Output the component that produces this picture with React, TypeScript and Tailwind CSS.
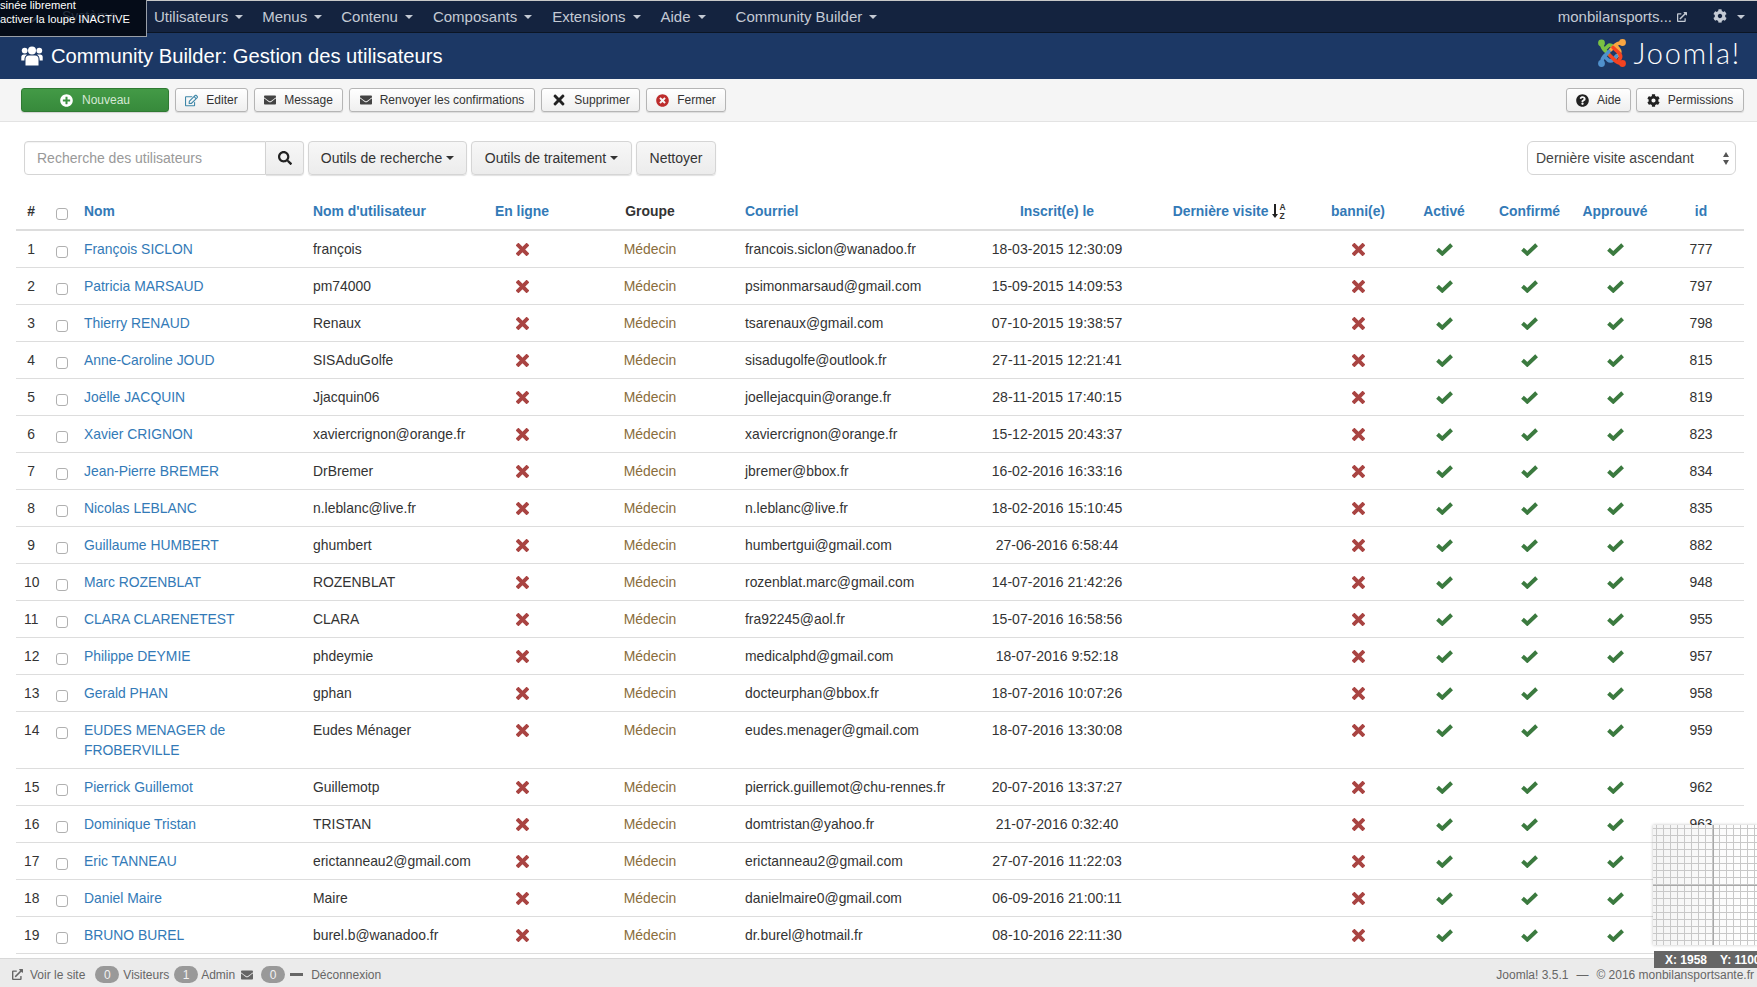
import React from "react";
import { FaCheck, FaCog, FaEnvelope, FaExternalLinkAlt, FaPlusCircle, FaQuestionCircle, FaRegEdit, FaSearch, FaTimes, FaTimesCircle } from "react-icons/fa";

const rows: [number, string, string, string, string, number][] = [
  [1, "François SICLON", "françois", "francois.siclon@wanadoo.fr", "18-03-2015 12:30:09", 777],
  [2, "Patricia MARSAUD", "pm74000", "psimonmarsaud@gmail.com", "15-09-2015 14:09:53", 797],
  [3, "Thierry RENAUD", "Renaux", "tsarenaux@gmail.com", "07-10-2015 19:38:57", 798],
  [4, "Anne-Caroline JOUD", "SISAduGolfe", "sisadugolfe@outlook.fr", "27-11-2015 12:21:41", 815],
  [5, "Joëlle JACQUIN", "Jjacquin06", "joellejacquin@orange.fr", "28-11-2015 17:40:15", 819],
  [6, "Xavier CRIGNON", "xaviercrignon@orange.fr", "xaviercrignon@orange.fr", "15-12-2015 20:43:37", 823],
  [7, "Jean-Pierre BREMER", "DrBremer", "jbremer@bbox.fr", "16-02-2016 16:33:16", 834],
  [8, "Nicolas LEBLANC", "n.leblanc@live.fr", "n.leblanc@live.fr", "18-02-2016 15:10:45", 835],
  [9, "Guillaume HUMBERT", "ghumbert", "humbertgui@gmail.com", "27-06-2016 6:58:44", 882],
  [10, "Marc ROZENBLAT", "ROZENBLAT", "rozenblat.marc@gmail.com", "14-07-2016 21:42:26", 948],
  [11, "CLARA CLARENETEST", "CLARA", "fra92245@aol.fr", "15-07-2016 16:58:56", 955],
  [12, "Philippe DEYMIE", "phdeymie", "medicalphd@gmail.com", "18-07-2016 9:52:18", 957],
  [13, "Gerald PHAN", "gphan", "docteurphan@bbox.fr", "18-07-2016 10:07:26", 958],
  [14, "EUDES MENAGER de FROBERVILLE", "Eudes Ménager", "eudes.menager@gmail.com", "18-07-2016 13:30:08", 959],
  [15, "Pierrick Guillemot", "Guillemotp", "pierrick.guillemot@chu-rennes.fr", "20-07-2016 13:37:27", 962],
  [16, "Dominique Tristan", "TRISTAN", "domtristan@yahoo.fr", "21-07-2016 0:32:40", 963],
  [17, "Eric TANNEAU", "erictanneau2@gmail.com", "erictanneau2@gmail.com", "27-07-2016 11:22:03", 964],
  [18, "Daniel Maire", "Maire", "danielmaire0@gmail.com", "06-09-2016 21:00:11", 965],
  [19, "BRUNO BUREL", "burel.b@wanadoo.fr", "dr.burel@hotmail.fr", "08-10-2016 22:11:30", 966],
];

const Caret = ({ className = "" }: { className?: string }) => (
  <span className={"inline-block h-0 w-0 border-x-[4px] border-t-[4px] border-x-transparent border-t-current align-middle " + className} />
);

const navItems: [string, string][] = [
  ["Utilisateurs", "mr-[19px]"],
  ["Menus", "mr-[19px]"],
  ["Contenu", "mr-[20px]"],
  ["Composants", "mr-[20px]"],
  ["Extensions", "mr-[20px]"],
  ["Aide", "mr-[30px]"],
  ["Community Builder", ""],
];

function JoomlaMark() {
  return (
    <svg width="30" height="30" viewBox="0 0 30 30" fill="none" strokeWidth="3.6" strokeLinecap="round">
      <path d="M4.5 5 Q5 10 8 12.5 L12 16.5" stroke="#7ac143" />
      <path d="M8 11 L11 8 Q13 6 16 8.5 L20 12.5" stroke="#7ac143" />
      <circle cx="4.5" cy="5" r="3.4" fill="#7ac143" />
      <path d="M25.5 4.5 Q20 5 17.5 8 L13.5 12" stroke="#f9a541" />
      <path d="M19 8 L21.5 11 Q24 14 21.5 16.5 L18 20" stroke="#f9a541" />
      <circle cx="25.5" cy="4.5" r="3.4" fill="#f9a541" />
      <path d="M4.5 25.5 Q5 20 8 17.5 L12 13.5" stroke="#5091cd" />
      <path d="M8 19 L11 22 Q13.5 24 16.5 21.5 L19.5 18" stroke="#5091cd" />
      <circle cx="4.5" cy="25.5" r="3.4" fill="#5091cd" />
      <path d="M25.5 25.5 Q20 25 17.5 22 L13 17.5" stroke="#f44321" />
      <path d="M22 22 Q25 19 22.5 15.5 L16 9.5" stroke="#f44321" />
      <circle cx="25.5" cy="25.5" r="3.4" fill="#f44321" />
    </svg>
  );
}

function UsersIcon() {
  return (
    <svg width="22" height="20" viewBox="0 0 22 20" fill="white">
      <circle cx="11" cy="4.6" r="4" />
      <circle cx="3.7" cy="4.6" r="2.9" />
      <circle cx="18.3" cy="4.6" r="2.9" />
      <path d="M4.5 19.5 V13 Q4.5 9.5 8 9.5 H14 Q17.5 9.5 17.5 13 V19.5 Z" />
      <path d="M0.3 14.5 V11 Q0.3 8.5 3 8.5 H6 Q3.4 10 3.4 13 V14.5 Z" />
      <path d="M21.7 14.5 V11 Q21.7 8.5 19 8.5 H16 Q18.6 10 18.6 13 V14.5 Z" />
    </svg>
  );
}

function SortIcon() {
  return (
    <svg width="14" height="16" viewBox="0 0 14 16" className="ml-[4px] inline-block align-[-3px]">
      <path d="M3 1v11" stroke="#222" strokeWidth="2" />
      <path d="M0 11h6l-3 4z" fill="#222" />
      <text x="7.5" y="7" fontSize="8.5" fontWeight="700" fill="#333" fontFamily="Liberation Sans, sans-serif">A</text>
      <text x="7.5" y="15.5" fontSize="8.5" fontWeight="700" fill="#333" fontFamily="Liberation Sans, sans-serif">Z</text>
    </svg>
  );
}

function ToolBtn({ icon, label, cls }: { icon: React.ReactNode; label: string; cls: string }) {
  return (
    <button className={"flex h-[24px] items-center justify-center rounded-[3px] border border-[#b5b5b5] bg-gradient-to-b from-white to-[#efefef] text-[12px] text-[#333] shadow-[0_1px_1px_rgba(0,0,0,0.1)] " + cls}>
      {icon}
      <span>{label}</span>
    </button>
  );
}

const filterBtn = "flex h-[34px] items-center justify-center rounded-[4px] border border-[#d5d5d5] bg-gradient-to-b from-[#f7f7f7] to-[#ececec] text-[14px] text-[#333] shadow-[0_1px_1px_rgba(0,0,0,0.12)]";

const th = "border-b-2 border-[#ddd] pt-[8px] pb-[8px] text-[13.9px] leading-[20px] font-bold whitespace-nowrap";
const td = "border-b border-[#ddd] px-[8px] py-[8px] align-top text-[13.9px] leading-[20px]";
const Cross = () => (
  <svg width="13" height="13" viewBox="0 0 13 13" className="mx-auto mt-[4px] block">
    <path d="M2.4 2.4 L10.6 10.6 M10.6 2.4 L2.4 10.6" stroke="#a94442" strokeWidth="3.9" strokeLinecap="square" />
  </svg>
);
const Check = () => (
  <svg width="17" height="13" viewBox="0 0 17 13" className="mx-auto mt-[4px] block">
    <path d="M1.5 6.2 L6.3 10.6 L15.6 1.8" fill="none" stroke="#3b7a3f" strokeWidth="4" />
  </svg>
);
const Box = () => <input type="checkbox" className="mt-[7px] ml-[2px] block h-[12px] w-[12px] appearance-none rounded-[3px] border border-[#b0b0b0] bg-white" />;

const widths = [30, 30, 229, 176, 82, 174, 236, 168, 174, 86, 86, 85, 86, 86];

export default function App() {
  return (
    <div className="relative flex h-[987px] w-[1757px] flex-col overflow-hidden bg-white font-['Liberation_Sans',Arial,sans-serif] text-[#333]">
      <nav className="flex h-[33px] shrink-0 items-center border-t border-t-[#c8c8c8] border-b border-b-[#0b1524] bg-[#14233f] pt-[1px] pl-[154px] pr-[12px] text-[15px] text-[#c4cad4]">
        {navItems.map(([t, m]) => (
          <span key={t} className={"flex items-center " + m}>
            {t}
            <Caret className="ml-[7px]" />
          </span>
        ))}
        <span className="ml-auto flex items-center">monbilansports...</span>
        <FaExternalLinkAlt className="ml-[5px] text-[10px]" />
        <FaCog className="ml-[26px] mb-[3px] text-[14px]" />
        <Caret className="ml-[10px]" />
      </nav>

      <header className="flex h-[46px] shrink-0 items-center bg-[#1c3865] pl-[21px] pr-[16px] text-white">
        <UsersIcon />
        <h1 className="ml-[8px] text-[20.2px] leading-none">Community Builder: Gestion des utilisateurs</h1>
        <div className="mb-[7px] ml-auto flex items-center">
          <JoomlaMark />
          <span className="ml-[6px] font-['Lato',sans-serif] text-[29px] leading-none font-light tracking-[1.8px]">Joomla!</span>
        </div>
      </header>

      <div className="flex h-[43px] shrink-0 items-center border-b border-[#e3e3e3] bg-[#f5f5f5] pl-[21px] pr-[13px]">
        <button className="flex h-[24px] w-[148px] items-center justify-center rounded-[3px] border border-[#2f7a32] bg-gradient-to-b from-[#439a46] to-[#378a3b] text-[12px] text-[#d5e8d5] shadow-[0_1px_1px_rgba(0,0,0,0.15)]">
          <FaPlusCircle className="mr-[9px] text-[13px] text-white" />
          Nouveau
        </button>
        <ToolBtn cls="ml-[6px] w-[73px]" icon={<FaRegEdit className="mr-[8px] text-[13px] text-[#3e87a8]" />} label="Editer" />
        <ToolBtn cls="ml-[6px] w-[89px]" icon={<FaEnvelope className="mr-[8px] text-[12px] text-[#444]" />} label="Message" />
        <ToolBtn cls="ml-[6px] w-[186px]" icon={<FaEnvelope className="mr-[8px] text-[12px] text-[#444]" />} label="Renvoyer les confirmations" />
        <ToolBtn cls="ml-[6px] w-[99px]" icon={<FaTimes className="mr-[7px] text-[16px] text-[#222]" />} label="Supprimer" />
        <ToolBtn cls="ml-[6px] w-[80px]" icon={<FaTimesCircle className="mr-[8px] text-[13px] text-[#bd2d2d]" />} label="Fermer" />
        <ToolBtn cls="ml-auto w-[65px]" icon={<FaQuestionCircle className="mr-[8px] text-[13px] text-[#222]" />} label="Aide" />
        <ToolBtn cls="ml-[5px] w-[108px]" icon={<FaCog className="mr-[8px] text-[13px] text-[#222]" />} label="Permissions" />
      </div>

      <div className="flex shrink-0 items-center pt-[19px] pl-[24px] pr-[21px]">
        <div className="flex h-[34px] w-[242px] items-center rounded-l-[4px] border border-[#d5d5d5] bg-white pl-[12px] text-[14px] text-[#999] shadow-[inset_0_1px_1px_rgba(0,0,0,0.05)]">
          Recherche des utilisateurs
        </div>
        <button className={filterBtn + " w-[38px] rounded-l-none border-l-0"}>
          <FaSearch className="text-[14px] text-[#222]" />
        </button>
        <button className={filterBtn + " ml-[4px] w-[159px]"}>
          Outils de recherche
          <Caret className="ml-[4px]" />
        </button>
        <button className={filterBtn + " ml-[4px] w-[161px]"}>
          Outils de traitement
          <Caret className="ml-[4px]" />
        </button>
        <button className={filterBtn + " ml-[4px] w-[80px]"}>Nettoyer</button>
        <div className="relative ml-auto flex h-[34px] w-[209px] items-center rounded-[6px] border border-[#d5d5d5] bg-white pl-[8px] text-[14px] text-[#444]">
          Dernière visite ascendant
          <span className="absolute top-[10px] right-[6px] h-0 w-0 border-x-[3px] border-b-[5px] border-x-transparent border-b-[#555]" />
          <span className="absolute top-[18px] right-[6px] h-0 w-0 border-x-[3px] border-t-[5px] border-x-transparent border-t-[#555]" />
        </div>
      </div>

      <div className="min-h-0 flex-1 overflow-hidden pt-[18px] pl-[16px]">
        <table className="w-[1728px] table-fixed border-separate border-spacing-0">
          <colgroup>
            {widths.map((w, i) => (
              <col key={i} style={{ width: w }} />
            ))}
          </colgroup>
          <thead>
            <tr>
              <th className={th + " px-[8px] text-center text-[#333]"}>#</th>
              <th className={th + " px-[8px]"}>
                <input type="checkbox" className="mt-[5px] ml-[2px] block h-[12px] w-[12px] appearance-none rounded-[3px] border border-[#b0b0b0] bg-white" />
              </th>
              <th className={th + " px-[8px] text-left text-[#337ab7]"}>Nom</th>
              <th className={th + " px-[8px] text-left text-[#337ab7]"}>Nom d'utilisateur</th>
              <th className={th + " px-[8px] text-center text-[#337ab7]"}>En ligne</th>
              <th className={th + " px-[8px] text-center text-[#333]"}>Groupe</th>
              <th className={th + " px-[8px] text-left text-[#337ab7]"}>Courriel</th>
              <th className={th + " px-[8px] text-center text-[#337ab7]"}>Inscrit(e) le</th>
              <th className={th + " pr-[7px] pl-[10px] text-center text-[#337ab7]"}>
                Dernière visite
                <SortIcon />
              </th>
              <th className={th + " px-[8px] text-center text-[#337ab7]"}>banni(e)</th>
              <th className={th + " px-[8px] text-center text-[#337ab7]"}>Activé</th>
              <th className={th + " px-[8px] text-center text-[#337ab7]"}>Confirmé</th>
              <th className={th + " px-[8px] text-center text-[#337ab7]"}>Approuvé</th>
              <th className={th + " px-[8px] text-center text-[#337ab7]"}>id</th>
            </tr>
          </thead>
          <tbody>
            {rows.map(([n, name, user, mail, date, id]) => (
              <tr key={n}>
                <td className={td + " text-center"}>{n}</td>
                <td className={td}><Box /></td>
                <td className={td + " text-[#337ab7]"}>{name}</td>
                <td className={td}>{user}</td>
                <td className={td}><Cross /></td>
                <td className={td + " text-center text-[#8a6d3b]"}>Médecin</td>
                <td className={td + " whitespace-nowrap"}>{mail}</td>
                <td className={td + " text-center text-[14.05px]"}>{date}</td>
                <td className={td}></td>
                <td className={td}><Cross /></td>
                <td className={td}><Check /></td>
                <td className={td}><Check /></td>
                <td className={td}><Check /></td>
                <td className={td + " text-center"}>{id}</td>
              </tr>
            ))}
          </tbody>
        </table>
      </div>

      <footer className="flex h-[29px] shrink-0 items-center border-t border-[#d8d8d8] bg-[#ebebeb] pt-[3px] pl-[12px] pr-[3px] text-[12px] text-[#666]">
        <FaExternalLinkAlt className="text-[11px]" />
        <span className="ml-[7px]">Voir le site</span>
        <span className="ml-[10px] flex h-[17px] w-[24px] items-center justify-center rounded-full bg-[#999] text-[#f2f2f2]">0</span>
        <span className="ml-[4px]">Visiteurs</span>
        <span className="ml-[5px] flex h-[17px] w-[24px] items-center justify-center rounded-full bg-[#999] text-[#f2f2f2]">1</span>
        <span className="ml-[3px]">Admin</span>
        <FaEnvelope className="ml-[6px] text-[12px]" />
        <span className="ml-[8px] flex h-[17px] w-[24px] items-center justify-center rounded-full bg-[#999] text-[#f2f2f2]">0</span>
        <span className="ml-[5px] h-[3px] w-[13px] bg-[#666]" />
        <span className="ml-[8px]">Déconnexion</span>
        <span className="ml-auto">Joomla! 3.5.1</span>
        <span className="mx-[8px]">—</span>
        <span>© 2016 monbilansportsante.fr</span>
      </footer>

      {/* screen-magnifier overlays */}
      <div className="absolute top-0 left-0 h-[37px] w-[147px] overflow-hidden border-r border-b border-[#9aa0a8] bg-[#050c18] text-[11.2px] leading-[14px] text-white">
        <FaCheck className="absolute top-[14px] left-[29px] text-[10px] text-[#25303f]" />
        <div className="absolute top-[9px] left-[62px] text-[14px] whitespace-nowrap text-[#25303f]">Système</div>
        <div className="relative mt-[-2px] whitespace-nowrap">sinée librement</div>
        <div className="relative whitespace-nowrap">activer la loupe INACTIVE</div>
      </div>
      <div className="absolute top-[825px] left-[1653px] h-[120px] w-[104px] overflow-hidden bg-gradient-to-r from-[#f4f4f4] to-white shadow-[0_0_3px_rgba(0,0,0,0.25)]">
        <svg width="104" height="120" viewBox="0 0 104 120">
          {Array.from({ length: 16 }, (_, i) => (
            <path key={"v" + i} d={`M${3.5 + i * 7} 0V120`} stroke="#c8c8c8" strokeWidth="1" />
          ))}
          {Array.from({ length: 18 }, (_, i) => (
            <path key={"h" + i} d={`M0 ${3.5 + i * 7}H104`} stroke="#c8c8c8" strokeWidth="1" />
          ))}
          <path d="M60.5 0V120M0 60.5H104" stroke="#a8a8a8" strokeWidth="1" />
        </svg>
      </div>
      <div className="absolute top-[951px] left-[1654px] flex h-[17px] w-[103px] items-center overflow-hidden bg-[#666] pl-[11px] text-[12px] font-bold whitespace-nowrap text-white">
        <span>X: 1958</span>
        <span className="ml-[13px]">Y: 1100</span>
      </div>
    </div>
  );
}
